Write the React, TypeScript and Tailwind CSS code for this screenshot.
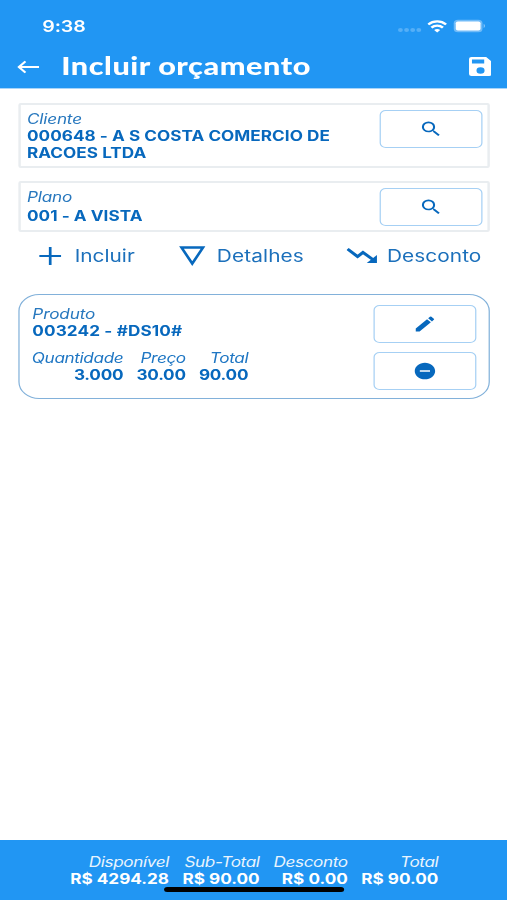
import type { ReactNode } from 'react'
import { MdDoNotDisturbOn, MdEdit, MdSearch } from 'react-icons/md'

function OutlineButton({ children }: { children: ReactNode }) {
  return (
    <button className="flex h-[38px] w-[84px] shrink-0 items-center justify-center rounded-[5px] border border-[#a6d0f4] text-[#0768bd]">
      {children}
    </button>
  )
}

type FieldProps = { label: string; value: string; className: string; valueClassName?: string }

function Field({ label, value, className, valueClassName }: FieldProps) {
  return (
    <div className={`flex justify-between rounded-[2px] border-2 border-[#e9edf0] pl-[5px] pr-[4.5px] ${className}`}>
      <div className="w-[265px]">
        <div className="italic font-normal text-[#2878be] tracking-[-0.15px]">{label}</div>
        <div className={`font-bold tracking-[0.03px] ${valueClassName ?? ''}`}>{value}</div>
      </div>
      <OutlineButton>
        <MdSearch size={20} className="mb-px" />
      </OutlineButton>
    </div>
  )
}

function Amount({ label, value, className }: { label: string; value: string; className: string }) {
  return (
    <div className={`flex flex-col items-end whitespace-nowrap ${className}`}>
      <div className="italic font-normal tracking-[-0.3px] opacity-90">{label}</div>
      <div className="font-bold">{value}</div>
    </div>
  )
}

function StatusBar() {
  return (
    <div className="flex h-[44px] items-center justify-between pt-[8px] pl-[34.5px] pr-[17px]">
      <span className="text-[16px] font-semibold tracking-[-0.1px]">9:38</span>
      <div className="flex items-center">
        <div className="mt-[7px] mr-[5px] flex gap-[1px]">
          {[0, 1, 2, 3].map((i) => (
            <span key={i} className="h-[4px] w-[4px] rounded-full bg-[#55aff7]" />
          ))}
        </div>
        <svg width="16" height="13" viewBox="0 0 16 13" fill="none" stroke="white" strokeWidth="2.2">
          <path d="M.7 4.5C4.8 .3 11.2 .3 15.3 4.5" />
          <path d="M3.3 7.6C6 5 10 5 12.7 7.6" />
          <path d="M5.5 9.9Q8 7.9 10.5 9.9L8 12.6Z" fill="white" stroke="none" />
        </svg>
        <svg className="ml-[5px]" width="27" height="14" viewBox="0 0 27 14">
          <rect x=".5" y=".7" width="23.5" height="12.6" rx="3.5" fill="#70bbf8" />
          <rect x="2.2" y="2.5" width="20.2" height="9" rx="1.7" fill="white" />
          <path d="M25 4.8Q27 7 25 9.2Z" fill="#8dcafa" />
        </svg>
      </div>
    </div>
  )
}

export default function App() {
  return (
    <div className="h-[900px] w-[507px] overflow-hidden bg-white">
      <div className="flex h-[900px] w-[414px] origin-top-left scale-x-[1.2246] flex-col font-['Inter','Liberation_Sans',sans-serif] text-[14px] leading-[17px] text-[#0768bd]">
        <header className="h-[88px] shrink-0 bg-[#2196f3] text-white shadow-[0_1px_0_#a8d5fa]">
          <StatusBar />
          <div className="flex h-[44px] items-center pl-[14px] pr-[13px]">
            <svg className="mt-px" width="18" height="14" viewBox="0 0 18 14" fill="none" stroke="white" strokeWidth="1.9">
              <path d="M18 7H1.4M6.8 1.4L1.4 7L6.8 12.6" />
            </svg>
            <h1 className="ml-[18px] -mt-[3px] font-['Lato',sans-serif] text-[25px] font-black leading-[30px] tracking-[0.45px] whitespace-nowrap">
              Incluir orçamento
            </h1>
            <svg className="ml-auto mt-px" width="18.5" height="19" viewBox="0 0 18.5 19" fill="white">
              <path
                fillRule="evenodd"
                d="M2 0H14L18.5 4.5V17Q18.5 19 16.5 19H2Q0 19 0 17V2Q0 0 2 0ZM2.4 2.6V6.6H12.4V2.6ZM9.4 10.2A3.3 3.3 0 1 0 9.4 16.8A3.3 3.3 0 1 0 9.4 10.2Z"
              />
            </svg>
          </div>
        </header>

        <main className="flex-1 pl-[15px] pr-[14px]">
          <Field
            label="Cliente"
            value="000648 - A S COSTA COMERCIO DE RACOES LTDA"
            className="mt-[15px] h-[65px] pt-[5px]"
          />
          <Field
            label="Plano"
            value="001 - A VISTA"
            className="mt-[13px] h-[51px] pt-[5px]"
            valueClassName="mt-[2px]"
          />

          <div className="flex h-[48px] items-center text-[17px] text-[#1c70bb]">
            <button className="flex items-center">
              <svg className="mb-px ml-[17px] mr-[11px]" width="18" height="18" viewBox="0 0 18 18" stroke="#0768bd" strokeWidth="2.2">
                <path d="M9 0V18M0 9H18" />
              </svg>
              <span className="w-[84.5px] text-left">Incluir</span>
            </button>
            <button className="flex items-center">
              <svg className="mb-px mr-[9.5px]" width="22" height="20" viewBox="0 0 22 20" fill="none" stroke="#0768bd" strokeWidth="2.3">
                <path d="M2.2 1.5H19.8L11 17.6Z" />
              </svg>
              <span className="w-[106px] text-left tracking-[0.1px]">Detalhes</span>
            </button>
            <button className="flex items-center">
              <svg className="mb-px mr-[8px]" width="25" height="15" viewBox="0 0 25 15" fill="none" stroke="#0768bd" strokeWidth="2.7">
                <path d="M.8 1L9 8.6L13.4 4.4L22 12" />
                <path d="M24.8 7V15H16.5Z" fill="#0768bd" stroke="none" />
              </svg>
              <span className="tracking-[0.05px]">Desconto</span>
            </button>
          </div>

          <div className="mt-[14px] flex h-[105px] justify-between rounded-[17px] border border-[#82b1da] pt-[10px] pl-[10.4px] pr-[10px]">
            <div>
              <div className="italic tracking-[-0.1px] text-[#2878be]">Produto</div>
              <div className="font-bold tracking-[0.1px]">003242 - #DS10#</div>
              <div className="mt-[10px] flex tracking-[-0.2px]">
                <Amount className="w-[74.3px]" label="Quantidade" value="3.000" />
                <Amount className="w-[51px]" label="Preço" value="30.00" />
                <Amount className="w-[51px]" label="Total" value="90.00" />
              </div>
            </div>
            <div className="flex flex-col gap-[9px]">
              <OutlineButton>
                <MdEdit size={20} />
              </OutlineButton>
              <OutlineButton>
                <MdDoNotDisturbOn size={20} />
              </OutlineButton>
            </div>
          </div>
        </main>

        <footer className="relative flex h-[60px] shrink-0 bg-[#2196f3] pt-[13px] text-white">
          <Amount className="w-[138px]" label="Disponível" value="R$ 4294.28" />
          <Amount className="w-[74px]" label="Sub-Total" value="R$ 90.00" />
          <Amount className="w-[72px]" label="Desconto" value="R$ 0.00" />
          <Amount className="w-[74px]" label="Total" value="R$ 90.00" />
          <div className="absolute top-[47px] left-[134px] h-[5px] w-[147px] rounded-full bg-black" />
        </footer>
      </div>
    </div>
  )
}
